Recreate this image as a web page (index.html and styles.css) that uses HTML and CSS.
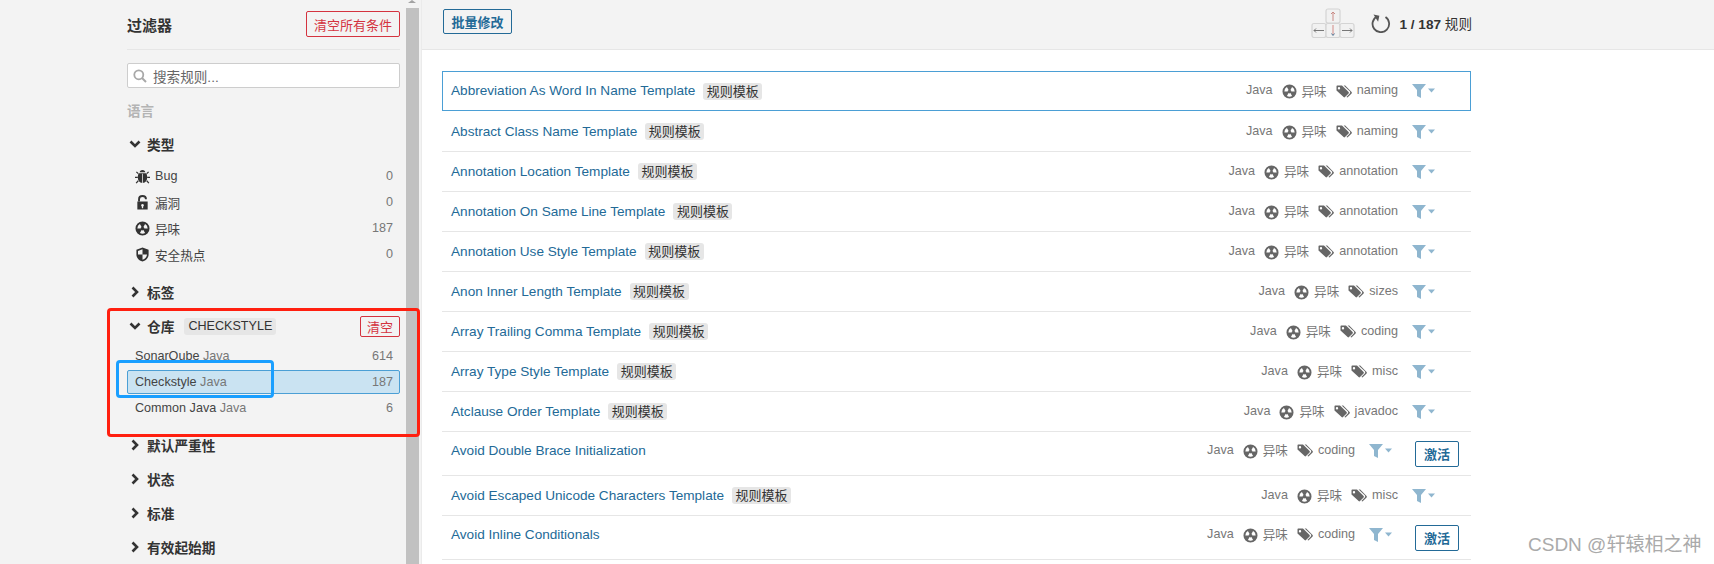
FILE: index.html
```html
<!DOCTYPE html>
<html lang="zh">
<head>
<meta charset="utf-8">
<title>规则</title>
<link rel="stylesheet" href="styles.css">
</head>
<body>
<svg class="defs" aria-hidden="true">
  <symbol id="i-smell" viewBox="0 0 16 16"><path fill-rule="evenodd" d="M8 .5a7.500 7.500 0 1 0 0 15 7.500 7.500 0 0 0 0-15ZM2.500 8A5.500 5.500 0 0 1 5.250 3.240L7 6.270A2 2 0 0 0 6 8ZM10.750 3.240A5.500 5.500 0 0 1 13.500 8H10A2 2 0 0 0 9 6.270ZM10.750 12.760A5.500 5.500 0 0 1 5.250 12.760L7 9.730A2 2 0 0 0 9 9.730Z"/></symbol>
  <symbol id="i-tag" viewBox="0 0 16 14"><path d="M.5 1.200C.5.800.8.500 1.200.500H6l6.600 6.600c.4.400.4 1 0 1.400l-3.600 3.600c-.4.400-1 .4-1.400 0L.5 5.500ZM3 2a1.200 1.200 0 1 0 0 2.400A1.200 1.200 0 0 0 3 2Z" fill-rule="evenodd"/><path d="M7.600.5h1.600l6.400 6.600c.4.400.4 1 0 1.400l-3.600 3.600c-.4.400-1 .4-1.400 0l-.2-.2 3.400-3.500c.6-.7.6-1.500 0-2.100Z"/></symbol>
  <symbol id="i-filter" viewBox="0 0 23 14"><path d="M0 0h14L9 6v8L5 12V6Z"/><path d="M16 4.500h7l-3.500 4Z"/></symbol>
  <symbol id="i-right" viewBox="0 0 12 12"><path d="M3.500 1.500 8 6l-4.500 4.500" fill="none" stroke="currentColor" stroke-width="2.600"/></symbol>
  <symbol id="i-down" viewBox="0 0 12 12"><path d="M1.500 3.500 6 8l4.500-4.500" fill="none" stroke="currentColor" stroke-width="2.600"/></symbol>
</svg>

<div class="page">
  <aside class="sidebar">
    <div class="filters">
      <header class="filters-head">
        <h2 class="filters-title">过滤器</h2>
        <button class="btn-danger btn-clear-all">清空所有条件</button>
      </header>
      <div class="search">
        <svg class="search-icon" viewBox="0 0 14 14"><circle cx="5.800" cy="5.800" r="4.500" fill="none" stroke="currentColor" stroke-width="1.800"/><path d="m9 9 4 4" stroke="currentColor" stroke-width="2"/></svg>
        <span class="search-text">搜索规则...</span>
      </div>
      <div class="facet-muted">语言</div>

      <div class="facet-head facet-type"><svg class="chev"><use href="#i-down"/></svg><span>类型</span></div>
      <ul class="facet-list type-list">
        <li class="facet-item"><span class="facet-name"><svg class="ficon" viewBox="0 0 16 16"><path d="M5 3.500C5 2 6.300 1 8 1s3 1 3 2.500ZM4 4.500h8c.6 1 1 2.500 1 4.500 0 3-1.500 5.500-5 6-3.500-.5-5-3-5-6 0-2 .4-3.500 1-4.500Z"/><path d="M7.600 5h.8v10h-.8Z" fill="#f3f3f3"/><path d="M3.500 5 1.500 3M12.500 5l2-2M3 9H0M13 9h3M3.500 12.500 1.200 15M12.500 12.500l2.300 2.500" stroke="currentColor" stroke-width="1.300" fill="none"/></svg>Bug</span><span class="facet-count">0</span></li>
        <li class="facet-item"><span class="facet-name"><svg class="ficon" viewBox="0 0 16 16"><path d="M2.500 7h11v8.500h-11ZM8 9.500a1.500 1.500 0 0 0-.7 2.800V14h1.400v-1.700A1.500 1.500 0 0 0 8 9.500Z" fill-rule="evenodd"/><path d="M4.300 7V4.500C4.300 2.300 5.800 1 8 1s3.700 1.300 3.700 3.500" fill="none" stroke="currentColor" stroke-width="2"/></svg>漏洞</span><span class="facet-count">0</span></li>
        <li class="facet-item"><span class="facet-name"><svg class="ficon"><use href="#i-smell"/></svg>异味</span><span class="facet-count">187</span></li>
        <li class="facet-item"><span class="facet-name"><svg class="ficon" viewBox="0 0 16 16"><path fill-rule="evenodd" d="M8 .5 14.500 3v5c0 3.500-2.500 6.200-6.500 7.500C4 14.200 1.500 11.500 1.500 8V3ZM3.200 8h4.800V2.400L3.200 4.200ZM8 8v5.700c2.800-1 4.600-3 4.800-5.700Z"/></svg>安全热点</span><span class="facet-count">0</span></li>
      </ul>

      <div class="facet-head facet-tags"><svg class="chev"><use href="#i-right"/></svg><span>标签</span></div>

      <div class="facet-head facet-repo"><svg class="chev"><use href="#i-down"/></svg><span>仓库</span><span class="facet-chip">CHECKSTYLE</span><button class="btn-danger btn-clear">清空</button></div>
      <ul class="facet-list repo-list">
        <li class="facet-item"><span class="facet-name">SonarQube <em class="lang">Java</em></span><span class="facet-count">614</span></li>
        <li class="facet-item active"><span class="facet-name">Checkstyle <em class="lang">Java</em></span><span class="facet-count">187</span></li>
        <li class="facet-item"><span class="facet-name">Common Java <em class="lang">Java</em></span><span class="facet-count">6</span></li>
      </ul>

      <div class="facet-head facet-closed first-closed"><svg class="chev"><use href="#i-right"/></svg><span>默认严重性</span></div>
      <div class="facet-head facet-closed"><svg class="chev"><use href="#i-right"/></svg><span>状态</span></div>
      <div class="facet-head facet-closed"><svg class="chev"><use href="#i-right"/></svg><span>标准</span></div>
      <div class="facet-head facet-closed"><svg class="chev"><use href="#i-right"/></svg><span>有效起始期</span></div>
    </div>
    <div class="scrollbar"><div class="scroll-arrow"></div><div class="scroll-thumb"></div></div>
  </aside>

  <main class="main">
    <div class="topbar">
      <button class="btn-primary btn-bulk">批量修改</button>
      <div class="topbar-right">
        <svg class="keys" viewBox="0 0 44 30">
          <g fill="#f1f1f1" stroke="#d4d4d4" stroke-width="1.200">
            <rect x="15" y="1" width="14" height="14" rx="2"/>
            <rect x="1" y="15.500" width="14" height="14" rx="2"/>
            <rect x="15" y="15.500" width="14" height="14" rx="2"/>
            <rect x="29" y="15.500" width="14" height="14" rx="2"/>
          </g>
          <g fill="none" stroke-width="1">
            <path d="M22 13V4M20 6l2-2 2 2" stroke="#c98a85"/>
            <path d="M22 17v10" stroke="#d28a85"/>
            <path d="M20.500 25.500l1.500 2 1.500-2" stroke="#557a99"/>
            <path d="M13 22.500H3M5 20.500l-2 2 2 2" stroke="#777"/>
            <path d="M31 22.500h10M39 20.500l2 2-2 2" stroke="#777"/>
          </g>
        </svg>
        <svg class="reload" viewBox="0 0 20 20"><path d="M6 3.500A8.300 8.300 0 1 0 14.500 4" fill="none" stroke="currentColor" stroke-width="1.800"/><path d="M1.800 2h6v6.200Z" transform="rotate(12 5 5)"/></svg>
        <span class="paging"><b>1 / 187</b> 规则</span>
      </div>
    </div>

    <ul class="rules">
      <li class="rule selected"><a class="rule-name">Abbreviation As Word In Name Template</a><span class="badge">规则模板</span><span class="meta"><span>Java</span><svg class="micon"><use href="#i-smell"/></svg><span>异味</span><svg class="mtag"><use href="#i-tag"/></svg><span class="mval">naming</span><svg class="mfilter"><use href="#i-filter"/></svg></span></li>
      <li class="rule"><a class="rule-name">Abstract Class Name Template</a><span class="badge">规则模板</span><span class="meta"><span>Java</span><svg class="micon"><use href="#i-smell"/></svg><span>异味</span><svg class="mtag"><use href="#i-tag"/></svg><span class="mval">naming</span><svg class="mfilter"><use href="#i-filter"/></svg></span></li>
      <li class="rule"><a class="rule-name">Annotation Location Template</a><span class="badge">规则模板</span><span class="meta"><span>Java</span><svg class="micon"><use href="#i-smell"/></svg><span>异味</span><svg class="mtag"><use href="#i-tag"/></svg><span class="mval">annotation</span><svg class="mfilter"><use href="#i-filter"/></svg></span></li>
      <li class="rule"><a class="rule-name">Annotation On Same Line Template</a><span class="badge">规则模板</span><span class="meta"><span>Java</span><svg class="micon"><use href="#i-smell"/></svg><span>异味</span><svg class="mtag"><use href="#i-tag"/></svg><span class="mval">annotation</span><svg class="mfilter"><use href="#i-filter"/></svg></span></li>
      <li class="rule"><a class="rule-name">Annotation Use Style Template</a><span class="badge">规则模板</span><span class="meta"><span>Java</span><svg class="micon"><use href="#i-smell"/></svg><span>异味</span><svg class="mtag"><use href="#i-tag"/></svg><span class="mval">annotation</span><svg class="mfilter"><use href="#i-filter"/></svg></span></li>
      <li class="rule"><a class="rule-name">Anon Inner Length Template</a><span class="badge">规则模板</span><span class="meta"><span>Java</span><svg class="micon"><use href="#i-smell"/></svg><span>异味</span><svg class="mtag"><use href="#i-tag"/></svg><span class="mval">sizes</span><svg class="mfilter"><use href="#i-filter"/></svg></span></li>
      <li class="rule"><a class="rule-name">Array Trailing Comma Template</a><span class="badge">规则模板</span><span class="meta"><span>Java</span><svg class="micon"><use href="#i-smell"/></svg><span>异味</span><svg class="mtag"><use href="#i-tag"/></svg><span class="mval">coding</span><svg class="mfilter"><use href="#i-filter"/></svg></span></li>
      <li class="rule"><a class="rule-name">Array Type Style Template</a><span class="badge">规则模板</span><span class="meta"><span>Java</span><svg class="micon"><use href="#i-smell"/></svg><span>异味</span><svg class="mtag"><use href="#i-tag"/></svg><span class="mval">misc</span><svg class="mfilter"><use href="#i-filter"/></svg></span></li>
      <li class="rule"><a class="rule-name">Atclause Order Template</a><span class="badge">规则模板</span><span class="meta"><span>Java</span><svg class="micon"><use href="#i-smell"/></svg><span>异味</span><svg class="mtag"><use href="#i-tag"/></svg><span class="mval">javadoc</span><svg class="mfilter"><use href="#i-filter"/></svg></span></li>
      <li class="rule tall"><a class="rule-name">Avoid Double Brace Initialization</a><span class="meta"><span>Java</span><svg class="micon"><use href="#i-smell"/></svg><span>异味</span><svg class="mtag"><use href="#i-tag"/></svg><span class="mval">coding</span><svg class="mfilter"><use href="#i-filter"/></svg></span><button class="btn-primary btn-activate">激活</button></li>
      <li class="rule"><a class="rule-name">Avoid Escaped Unicode Characters Template</a><span class="badge">规则模板</span><span class="meta"><span>Java</span><svg class="micon"><use href="#i-smell"/></svg><span>异味</span><svg class="mtag"><use href="#i-tag"/></svg><span class="mval">misc</span><svg class="mfilter"><use href="#i-filter"/></svg></span></li>
      <li class="rule tall"><a class="rule-name">Avoid Inline Conditionals</a><span class="meta"><span>Java</span><svg class="micon"><use href="#i-smell"/></svg><span>异味</span><svg class="mtag"><use href="#i-tag"/></svg><span class="mval">coding</span><svg class="mfilter"><use href="#i-filter"/></svg></span><button class="btn-primary btn-activate">激活</button></li>
    </ul>
  </main>
</div>

<div class="mark mark-red"></div>
<div class="mark mark-blue"></div>
<div class="watermark">CSDN @轩辕相之神</div>
</body>
</html>
```

FILE: styles.css
```css
* { box-sizing: border-box; }
html, body { margin: 0; height: 564px; overflow: hidden; background: #fff; }
body { font-family: "Liberation Sans", "Noto Sans CJK SC", sans-serif; font-size: 12.6px; color: #444; position: relative; }
.defs { position: absolute; width: 0; height: 0; }
svg { fill: currentColor; flex: none; display: block; }
ul { list-style: none; margin: 0; padding: 0; }
button { font-family: inherit; background: transparent; cursor: pointer; padding: 0; border-radius: 2px; }

.page { display: flex; height: 564px; }
.sidebar { width: 422px; flex: none; display: flex; background: #f3f3f3; border-right: 1px solid #ebebeb; padding-left: 127px; height: 564px; overflow: hidden; }
.filters { width: 273px; flex: none; }
.scrollbar { width: 13px; margin-left: 6px; flex: none; display: flex; flex-direction: column; }
.scroll-arrow { height: 8px; background: #f3f3f3; position: relative; }
.scroll-arrow::before { content: ""; position: absolute; left: 2px; top: 0; border: 4px solid transparent; border-top: 0; border-bottom: 3px solid #a3a3a3; }
.scroll-thumb { flex: 1; background: #c1c1c1; }

.filters-head { display: flex; align-items: center; justify-content: space-between; height: 50px; padding: 0 0 1px; border-bottom: 1px solid #e6e6e6; }
.filters-title { margin: 0; font-size: 15px; font-weight: 700; color: #333; }
.btn-danger { border: 1px solid #d4333f; color: #d4333f; font-size: 13px; }
.btn-clear-all { width: 94px; height: 26px; }
.search { margin-top: 13px; height: 25px; border: 1px solid #cdcdcd; border-radius: 2px; background: #fff; display: flex; align-items: center; padding-left: 5px; gap: 6px; }
.search-icon { width: 14px; height: 14px; color: #a8a8a8; }
.search-text { font-size: 13.6px; color: #666; }
.facet-muted { margin-top: 15px; font-size: 13.5px; line-height: 18px; font-weight: 700; color: #b4b4b4; }

.facet-head { display: flex; align-items: center; height: 20px; font-size: 13.7px; font-weight: 700; color: #333; }
.chev { width: 12px; height: 12px; margin: 0 6px 0 2px; color: #333; }
.facet-type { margin-top: 13px; }
.type-list { margin-top: 10px; }
.facet-item { display: flex; justify-content: space-between; align-items: center; height: 24px; margin-bottom: 2px; padding: 0 6px; border: 1px solid transparent; border-radius: 2px; }
.facet-name { display: flex; align-items: center; white-space: pre; }
.facet-count { color: #777; }
.ficon { width: 15px; height: 15px; margin: 0 5px 0 1px; color: #333; }
.lang { font-style: normal; color: #777; }
.facet-tags { margin-top: 16px; }
.facet-repo { margin-top: 13px; height: 22px; }
.facet-chip { margin-left: 10px; padding: 0 4px; height: 17px; line-height: 17px; background: #e6e6e6; border-radius: 3px; font-size: 12.6px; font-weight: 400; }
.btn-clear { margin-left: auto; width: 40px; height: 21px; font-weight: 400; }
.repo-list { margin-top: 7px; }
.repo-list .facet-item { padding-left: 7px; }
.active { background: #cae3f2; border-color: #4b9fd5; }
.first-closed { margin-top: 15px; }
.facet-closed + .facet-closed { margin-top: 14px; }

.main { flex: 1; min-width: 0; }
.topbar { height: 50px; background: #f3f3f3; border-bottom: 1px solid #e6e6e6; display: flex; align-items: flex-start; justify-content: space-between; padding: 0 242px 0 21px; }
.btn-primary { border: 1px solid #236a97; color: #236a97; font-weight: 700; font-size: 13px; }
.btn-bulk { margin-top: 9px; width: 69px; height: 25px; }
.topbar-right { display: flex; align-items: center; margin-top: 8px; }
.keys { width: 44px; height: 30px; }
.reload { width: 20px; height: 20px; margin-left: 16px; color: #555; }
.paging { margin-left: 8px; font-size: 13.6px; color: #333; }

.rules { width: 1029px; margin: 21px 0 0 20px; }
.rule { display: flex; align-items: center; height: 40px; padding: 0 36px 0 9px; border-bottom: 1px solid #e6e6e6; white-space: nowrap; }
.rule.selected { border: 1px solid #4b9fd5; padding-left: 8px; padding-right: 35px; margin-bottom: 1px; }
.rule.tall { height: 44px; padding-right: 12px; }
.rule.tall .rule-name { margin-bottom: 7px; }
.rule.tall .meta { margin-bottom: 6px; }
.rule-name { color: #236a97; font-size: 13.6px; margin-bottom: 1px; }
.badge { margin-left: 8px; padding: 0 3.500px; height: 17px; line-height: 17px; background: #e6e6e6; border-radius: 3px; color: #333; font-size: 13px; }
.meta { margin-left: auto; display: flex; align-items: center; font-size: 12.6px; color: #777; padding-bottom: 2px; }
.micon { width: 15px; height: 15px; margin: 3px 5px 0 9px; color: #666; }
.mtag { width: 16px; height: 14px; margin: 3px 5px 0 9px; color: #666; }
.mfilter { width: 23px; height: 14px; margin: 2px 0 0 14px; color: #8fb6cf; }
.btn-activate { width: 44px; height: 26px; margin-left: 23px; font-size: 13px; }

.mark { position: absolute; border-style: solid; border-width: 3px; border-radius: 4px; }
.mark-red { left: 107px; top: 308px; width: 313px; height: 129px; border-color: #ff1f0f; }
.mark-blue { left: 116px; top: 360px; width: 158px; height: 38px; border-color: #1a9fff; }
.watermark { position: absolute; left: 1528px; top: 533px; font-size: 19px; line-height: 24px; color: #aaa; white-space: nowrap; }
```
